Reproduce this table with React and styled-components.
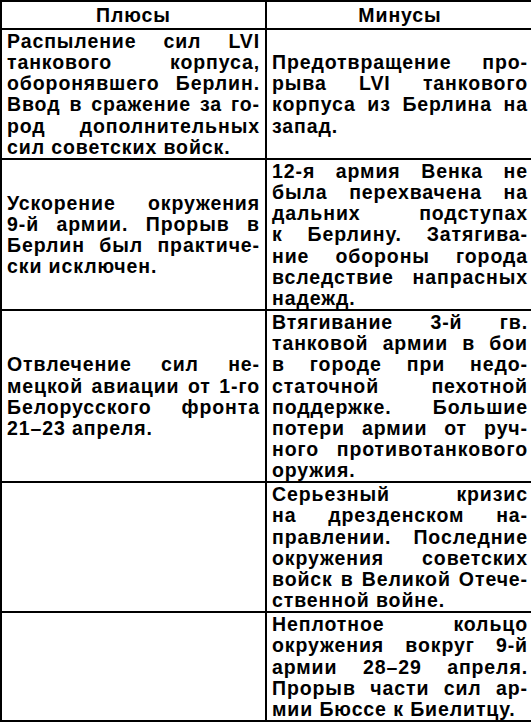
import React from 'react';
import styled, { createGlobalStyle } from 'styled-components';

const Global = createGlobalStyle`
  html, body { margin: 0; padding: 0; background: #fff; }
  body { width: 531px; height: 726px; overflow: hidden; }
`;

const Table = styled.div`
  display: grid;
  grid-template-columns: 265px 268px;
  width: 533px;
  border-top: 2px solid #000;
  border-left: 2px solid #000;
  box-sizing: border-box;
  font-family: "Liberation Sans", Arial, sans-serif;
  font-weight: 700;
  color: #000;
`;

const HeadCell = styled.div`
  box-sizing: border-box;
  height: 28px;
  border-right: 2px solid #000;
  border-bottom: 2px solid #000;
  font-size: 19.5px;
  letter-spacing: 0.9px;
  line-height: 26px;
  text-align: center;
`;

const Cell = styled.div`
  box-sizing: border-box;
  border-right: 2px solid #000;
  border-bottom: 2px solid #000;
  padding: 1px 5px 0 5px;
  display: flex;
  flex-direction: column;
  justify-content: center;
  font-size: 19.5px;
  letter-spacing: 0.9px;
  line-height: 21.15px;
`;

const Line = styled.span`
  display: block;
  text-align: justify;
  text-align-last: ${(p) => (p.$last ? 'left' : 'justify')};
`;

const rows = [
  {
    plus: [
      'Распыление сил LVI',
      'танкового корпуса,',
      'оборонявшего Берлин.',
      'Ввод в сражение за го-',
      'род дополнительных',
      'сил советских войск.',
    ],
    minus: [
      'Предотвращение про-',
      'рыва LVI танкового',
      'корпуса из Берлина на',
      'запад.',
    ],
  },
  {
    plus: [
      'Ускорение окружения',
      '9-й армии. Прорыв в',
      'Берлин был практиче-',
      'ски исключен.',
    ],
    minus: [
      '12-я армия Венка не',
      'была перехвачена на',
      'дальних подступах',
      'к Берлину. Затягива-',
      'ние обороны города',
      'вследствие напрасных',
      'надежд.',
    ],
  },
  {
    plus: [
      'Отвлечение сил не-',
      'мецкой авиации от 1-го',
      'Белорусского фронта',
      '21–23 апреля.',
    ],
    minus: [
      'Втягивание 3-й гв.',
      'танковой армии в бои',
      'в городе при недо-',
      'статочной пехотной',
      'поддержке. Большие',
      'потери армии от руч-',
      'ного противотанкового',
      'оружия.',
    ],
  },
  {
    plus: [],
    minus: [
      'Серьезный кризис',
      'на дрезденском на-',
      'правлении. Последние',
      'окружения советских',
      'войск в Великой Отече-',
      'ственной войне.',
    ],
  },
  {
    plus: [],
    minus: [
      'Неплотное кольцо',
      'окружения вокруг 9-й',
      'армии 28–29 апреля.',
      'Прорыв части сил ар-',
      'мии Бюссе к Биелитцу.',
    ],
  },
];

function Text({ lines }) {
  return lines.map((l, i) => (
    <Line key={i} $last={i === lines.length - 1}>
      {l}
    </Line>
  ));
}

export default function App() {
  return (
    <>
      <Global />
      <Table>
        <HeadCell>Плюсы</HeadCell>
        <HeadCell>Минусы</HeadCell>
        {rows.map((r, i) => (
          <React.Fragment key={i}>
            <Cell>
              <Text lines={r.plus} />
            </Cell>
            <Cell>
              <Text lines={r.minus} />
            </Cell>
          </React.Fragment>
        ))}
      </Table>
    </>
  );
}
